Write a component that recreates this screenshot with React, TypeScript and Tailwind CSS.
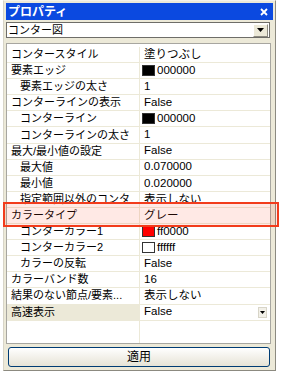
import React from "react";

type Row = {
  label: string;
  value: string;
  indent?: boolean;
  swatch?: string;
  selected?: boolean;
  dropdown?: boolean;
};

const rows: Row[] = [
  { label: "コンタースタイル", value: "塗りつぶし" },
  { label: "要素エッジ", value: "000000", swatch: "#000000" },
  { label: "要素エッジの太さ", value: "1", indent: true },
  { label: "コンターラインの表示", value: "False" },
  { label: "コンターライン", value: "000000", swatch: "#000000", indent: true },
  { label: "コンターラインの太さ", value: "1", indent: true },
  { label: "最大/最小値の設定", value: "False" },
  { label: "最大値", value: "0.070000", indent: true },
  { label: "最小値", value: "0.020000", indent: true },
  { label: "指定範囲以外のコンタ", value: "表示しない", indent: true },
  { label: "カラータイプ", value: "グレー" },
  { label: "コンターカラー1", value: "ff0000", swatch: "#ff0000", indent: true },
  { label: "コンターカラー2", value: "ffffff", swatch: "#ffffff", indent: true },
  { label: "カラーの反転", value: "False", indent: true },
  { label: "カラーバンド数", value: "16" },
  { label: "結果のない節点/要素...", value: "表示しない" },
  { label: "高速表示", value: "False", selected: true, dropdown: true },
];

export default function App() {
  return (
    <div
      className="relative w-[285px] h-[377px] bg-white overflow-hidden text-black"
      style={{ fontFamily: '"Liberation Sans", "Noto Sans CJK JP", sans-serif' }}
    >
      {/* PANEL */}
      <div className="ml-[3px] w-[273px] h-[371px] bg-[#ece9d8] border border-t-[#f4f2ea] border-l-[#d8d5c8] border-r-[#8c8a80] border-b-[#8c8a80] flex flex-col px-[2px] pt-[2px] pb-[3px]">
        {/* TITLE */}
        <div className="h-[17px] shrink-0 bg-[#0b49e0] flex items-center justify-between pl-[2px] pr-[5px]">
          <span className="text-white font-bold text-[12px] leading-none">プロパティ</span>
          <svg width="8" height="8" viewBox="0 0 8 8">
            <path d="M1 1 L7 7 M7 1 L1 7" stroke="#fff" strokeWidth="1.8" />
          </svg>
        </div>

        {/* OBJECT SELECTOR */}
        <div className="mt-[2px] mr-[3px] h-[16px] shrink-0 bg-white border border-[#6e6d68] flex items-center justify-between pl-[1px] pr-[1px]">
          <span className="text-[11px] leading-none">コンター図</span>
          <div className="w-[15px] h-[13px] bg-[#ece9d8] border border-t-white border-l-white border-r-[#8c8a80] border-b-[#8c8a80] flex items-center justify-center">
            <svg width="7" height="4" viewBox="0 0 7 4">
              <path d="M0 0 H7 L3.5 4 Z" fill="#000" />
            </svg>
          </div>
        </div>

        {/* GRID */}
        <div className="mt-[5px] mr-[2px] flex-1 min-h-0 bg-white border border-[#a7a6a0] pt-[3px] flex flex-col">
          {rows.map((r, i) => (
            <div key={i} className="flex h-[16.1px] shrink-0 border-b border-[#ece9d8]">
              <div
                className={`w-[133px] shrink-0 border-r border-[#ece9d8] flex items-center overflow-hidden whitespace-nowrap text-[11px] leading-none ${
                  r.indent ? "pl-[13px]" : "pl-[4px]"
                } ${r.selected ? "bg-[#ece9d8]" : ""}`}
              >
                {r.label}
              </div>
              <div className={`flex-1 flex items-center text-[11.5px] leading-none ${r.swatch ? "pl-[2px]" : "pl-[4px]"}`}>
                {r.swatch && (
                  <span
                    className="inline-block w-[13px] h-[11px] border border-[#333] mr-[2px]"
                    style={{ backgroundColor: r.swatch }}
                  />
                )}
                <span className="flex-1">{r.value}</span>
                {r.dropdown && (
                  <div className="w-[9px] h-[11px] mr-[3px] bg-[#f2f0e8] border border-[#d8d5c8] flex items-center justify-center">
                    <svg width="5" height="3" viewBox="0 0 5 3">
                      <path d="M0 0 H5 L2.5 3 Z" fill="#000" />
                    </svg>
                  </div>
                )}
              </div>
            </div>
          ))}
          {/* empty filler keeps the column divider */}
          <div className="flex flex-1">
            <div className="w-[133px] border-r border-[#ece9d8]" />
            <div className="flex-1" />
          </div>
        </div>

        {/* APPLY BUTTON */}
        <button className="mt-[3px] ml-[2px] mr-[3px] h-[20px] shrink-0 rounded-[3px] border border-[#003c74] bg-gradient-to-b from-white to-[#e6e3d6] text-[12px] leading-none">
          適用
        </button>
      </div>

      {/* ANNOTATION */}
      <div className="absolute left-[3px] top-[202px] w-[276px] h-[25px] border-2 border-[#f23c1c] bg-[rgba(255,70,40,0.12)]" />
    </div>
  );
}
